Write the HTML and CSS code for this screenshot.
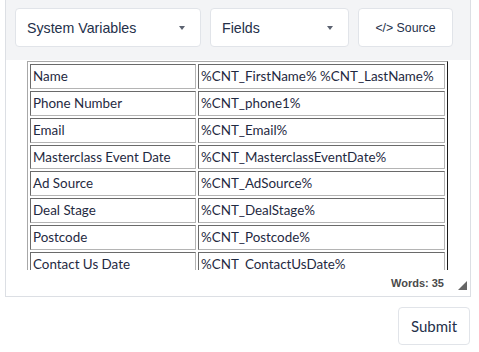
FILE: index.html
```html
<!DOCTYPE html>
<html>
<head>
<meta charset="utf-8">
<link rel="stylesheet" href="styles.css">
</head>
<body>
<div class="editor">
  <div class="toolbar">
    <button class="tb-btn select sv"><span>System Variables</span><span class="caret"></span></button>
    <button class="tb-btn select fields"><span>Fields</span><span class="caret"></span></button>
    <button class="tb-btn source">&lt;/&gt; Source</button>
  </div>
  <div class="content">
    <table class="vars">
      <tr><td class="k">Name</td><td class="v">%CNT_FirstName% %CNT_LastName%</td></tr>
      <tr><td class="k">Phone Number</td><td class="v">%CNT_phone1%</td></tr>
      <tr><td class="k">Email</td><td class="v">%CNT_Email%</td></tr>
      <tr><td class="k">Masterclass Event Date</td><td class="v">%CNT_MasterclassEventDate%</td></tr>
      <tr><td class="k">Ad Source</td><td class="v">%CNT_AdSource%</td></tr>
      <tr><td class="k">Deal Stage</td><td class="v">%CNT_DealStage%</td></tr>
      <tr><td class="k">Postcode</td><td class="v">%CNT_Postcode%</td></tr>
      <tr><td class="k">Contact Us Date</td><td class="v">%CNT_ContactUsDate%</td></tr>
    </table>
  </div>
  <div class="statusbar">
    <span class="words">Words: 35</span>
    <span class="resize"></span>
  </div>
</div>
<div class="actions">
  <button class="submit">Submit</button>
</div>
</body>
</html>
```
FILE: styles.css
```css
html, body {
  margin: 0;
  padding: 0;
  background: #ffffff;
}
body {
  font-family: "Liberation Sans", Arial, sans-serif;
}
.editor {
  margin-left: 5px;
  width: 466px;
  box-sizing: border-box;
  border: 1px solid #dcdfe4;
  border-top: none;
  background: #ffffff;
}
.toolbar {
  display: flex;
  gap: 9px;
  padding: 8px 9px 13px;
  background: #f3f4f6;
}
.tb-btn {
  height: 39px;
  box-sizing: border-box;
  background: #ffffff;
  border: 1px solid #e1e4e9;
  border-radius: 4px;
  font-family: "Liberation Sans", Arial, sans-serif;
  color: #24304a;
  padding: 0;
  display: flex;
  align-items: center;
}
.select {
  font-size: 14.2px;
  justify-content: space-between;
  padding: 0 15px 0 11px;
}
.sv { width: 186px; }
.fields { width: 139px; }
.caret {
  width: 0;
  height: 0;
  border-left: 3.5px solid transparent;
  border-right: 3.5px solid transparent;
  border-top: 4px solid #5b6270;
}
.source {
  width: 95px;
  font-size: 12.3px;
  justify-content: center;
}
.content {
  height: 209px;
  overflow: hidden;
  padding: 1px 0 0 21px;
}
.vars {
  border-collapse: separate;
  border-spacing: 2px;
  border: 1px solid;
  border-color: #a8a8a8 #1c1c1c #1c1c1c #a8a8a8;
  font-family: Lato, "Liberation Sans", sans-serif;
  font-size: 13.4px;
  color: #1f2a42;
}
.vars td {
  border: 1px solid;
  border-color: #6a6a6a #b4b4b4 #b4b4b4 #6a6a6a;
  padding: 0 2px;
  height: 22.85px;
  line-height: 22.85px;
  white-space: nowrap;
}
.vars td.k { width: 160px; }
.vars td.v { width: 241px; }
.statusbar {
  height: 26px;
  display: flex;
  align-items: center;
  justify-content: flex-end;
  gap: 14px;
  padding-right: 3px;
}
.words {
  font-family: "Liberation Sans", Arial, sans-serif;
  font-weight: bold;
  font-size: 11px;
  color: #4a4a4a;
}
.resize {
  width: 0;
  height: 0;
  border-left: 9px solid transparent;
  border-bottom: 9px solid #666;
  margin-top: 4px;
}
.actions {
  width: 470px;
  display: flex;
  justify-content: flex-end;
  margin-top: 10px;
}
.submit {
  width: 72px;
  height: 38px;
  box-sizing: border-box;
  background: #ffffff;
  border: 1px solid #e1e4e9;
  border-radius: 4px;
  font-family: Lato, "Liberation Sans", sans-serif;
  font-size: 15px;
  color: #24304a;
  padding: 0;
}
```
